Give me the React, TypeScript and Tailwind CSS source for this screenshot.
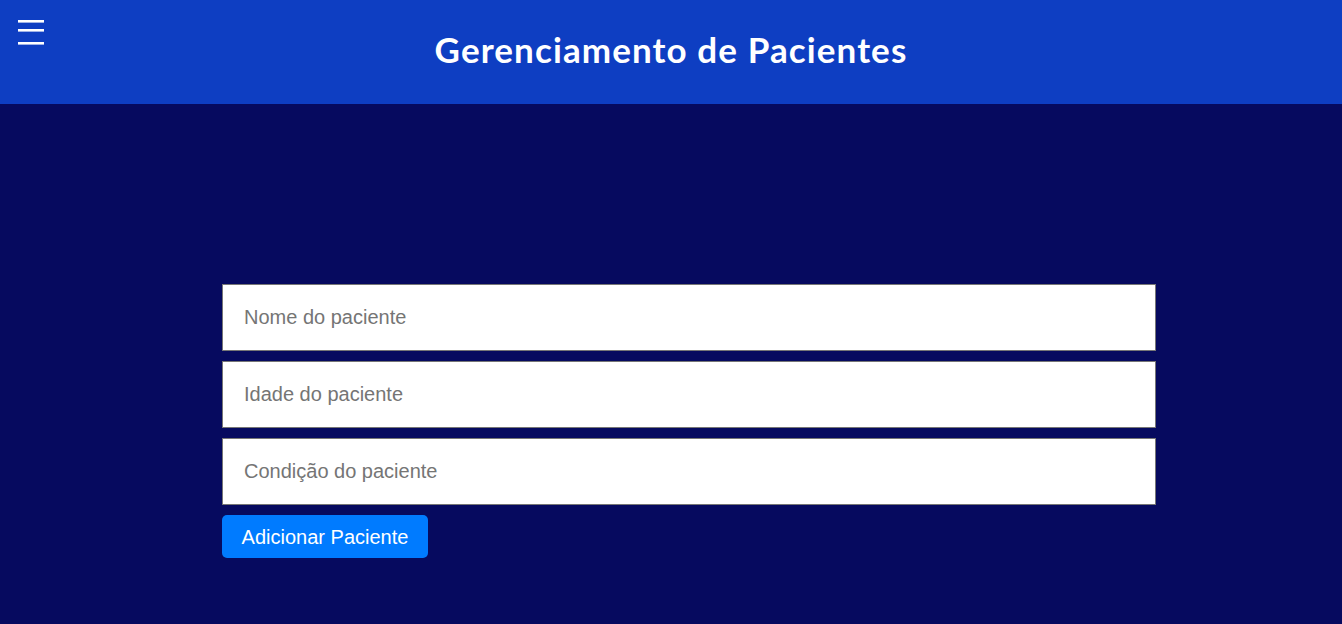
const inputs = ["Nome do paciente", "Idade do paciente", "Condição do paciente"];

export default function App() {
  return (
    <div className="min-h-screen bg-[#060a5f] font-['Liberation_Sans',Arial,sans-serif]">
      <header className="relative h-[104px] bg-[#0e3ec2] flex items-start justify-center">
        <button className="absolute left-[18px] top-[20px]">
          <svg width="26" height="25" viewBox="0 0 26 25" className="block">
            <rect x="0" y="0" width="26" height="2.6" fill="white" />
            <rect x="0" y="9" width="26" height="2.6" fill="white" />
            <rect x="0" y="22" width="26" height="2.6" fill="white" />
          </svg>
        </button>
        <h1 className="mt-[26px] text-white text-[35px] font-bold leading-[46px] tracking-[1.1px] font-['Lato','Open_Sans',sans-serif]">
          Gerenciamento de Pacientes
        </h1>
      </header>
      <main className="pt-[180px] pl-[222px]">
        <form className="w-[934px] flex flex-col gap-[10px]" onSubmit={(e) => e.preventDefault()}>
          {inputs.map((p) => (
            <input
              key={p}
              placeholder={p}
              className="h-[67px] bg-white border border-[#767676] px-[21px] text-[20px] text-black placeholder:text-[#757575] outline-none"
            />
          ))}
          <div>
            <button
              type="submit"
              className="h-[43px] w-[206px] rounded-[5px] bg-[#007bff] text-white text-[20px]"
            >
              Adicionar Paciente
            </button>
          </div>
        </form>
      </main>
    </div>
  );
}
